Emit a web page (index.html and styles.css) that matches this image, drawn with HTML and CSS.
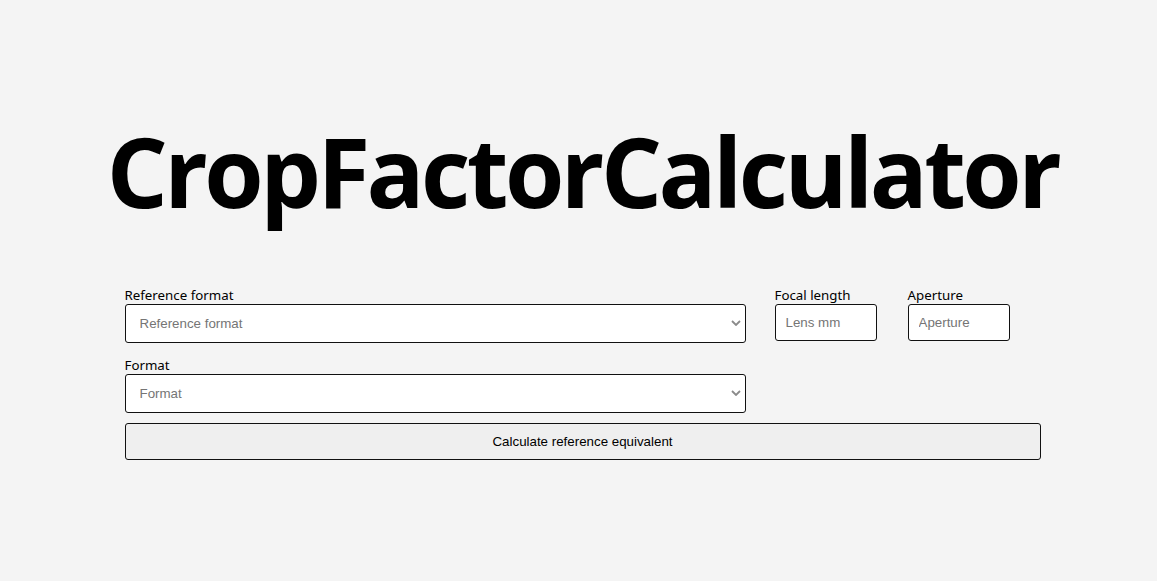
FILE: index.html
```html
<!DOCTYPE html>
<html>
<head>
<meta charset="utf-8">
<link rel="stylesheet" href="styles.css">
</head>
<body>
<main class="page">
  <h1 class="title">CropFactorCalculator</h1>
  <form class="calc">
    <div class="row">
      <div class="field field-wide">
        <label class="label">Reference format</label>
        <div class="select-wrap">
          <select class="select">
            <option>Reference format</option>
          </select>
          <svg class="chevron" width="10" height="6" viewBox="0 0 10 6"><path d="M1 1 L5 5 L9 1" fill="none" stroke="#8a8a8a" stroke-width="1.8"/></svg>
        </div>
      </div>
      <div class="field field-small">
        <label class="label">Focal length</label>
        <input class="input" type="text" placeholder="Lens mm">
      </div>
      <div class="field field-small">
        <label class="label">Aperture</label>
        <input class="input" type="text" placeholder="Aperture">
      </div>
    </div>
    <div class="row row-second">
      <div class="field field-wide">
        <label class="label">Format</label>
        <div class="select-wrap">
          <select class="select">
            <option>Format</option>
          </select>
          <svg class="chevron" width="10" height="6" viewBox="0 0 10 6"><path d="M1 1 L5 5 L9 1" fill="none" stroke="#8a8a8a" stroke-width="1.8"/></svg>
        </div>
      </div>
    </div>
    <button class="btn" type="button">Calculate reference equivalent</button>
  </form>
</main>
</body>
</html>
```
FILE: styles.css
```css
html, body {
  margin: 0;
  padding: 0;
  background: #f4f4f4;
}
.page {
  width: 916px;
  margin: 0 auto;
  padding-left: 8px;
  padding-top: 1px;
}
.title {
  font-family: "Open Sans", "Noto Sans", sans-serif;
  font-weight: 700;
  font-size: 96px;
  line-height: 140px;
  margin: 100px -60px 0 -60px;
  text-align: center;
  color: #000;
  letter-spacing: -3.55px;
}
.calc {
  margin-top: 46px;
  display: flex;
  flex-direction: column;
}
.row {
  display: flex;
  align-items: flex-start;
}
.row-second {
  margin-top: 14px;
}
.field {
  display: flex;
  flex-direction: column;
}
.field-wide {
  width: 621px;
  margin-right: 29px;
}
.field-small {
  width: 102px;
  margin-right: 31px;
}
.label {
  font-family: "Noto Sans", "Open Sans", sans-serif;
  font-size: 13.3px;
  line-height: 17px;
  color: #000;
}
.select-wrap {
  position: relative;
  display: flex;
}
.select {
  appearance: none;
  -webkit-appearance: none;
  width: 100%;
  height: 39px;
  border: 1px solid #111;
  border-radius: 3px;
  background: #fff;
  font-family: "Liberation Sans", Arial, sans-serif;
  font-size: 13.33px;
  color: #757575;
  padding: 0 14px;
}
.chevron {
  position: absolute;
  right: 5px;
  top: 16px;
  pointer-events: none;
}
.input {
  box-sizing: border-box;
  width: 102px;
  height: 37px;
  border: 1px solid #111;
  border-radius: 3px;
  background: #fff;
  font-family: "Liberation Sans", Arial, sans-serif;
  font-size: 13.33px;
  padding: 0 10px;
}
.input::placeholder {
  color: #757575;
}
.btn {
  margin-top: 10px;
  width: 916px;
  height: 37px;
  border: 1px solid #111;
  border-radius: 3px;
  background: #efefef;
  font-family: "Liberation Sans", Arial, sans-serif;
  font-size: 13.33px;
  color: #000;
}
```
